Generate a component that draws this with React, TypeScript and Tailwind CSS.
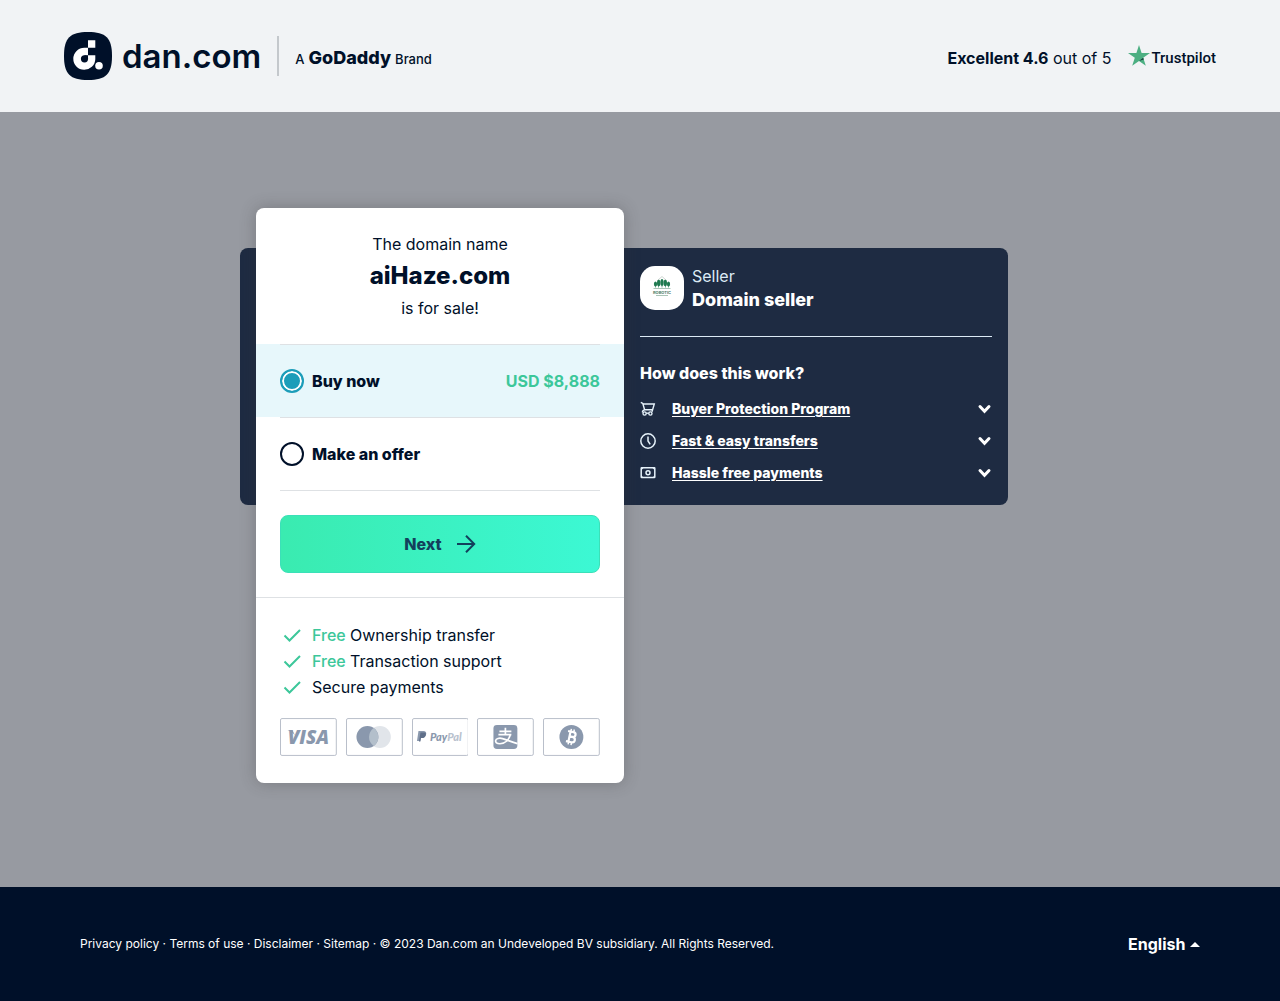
import { useState } from 'react';
import type { ReactNode } from 'react';

const STEPS = [
  { label: 'Buyer Protection Program', icon: <CartIcon /> },
  { label: 'Fast & easy transfers', icon: <ClockIcon /> },
  { label: 'Hassle free payments', icon: <CashIcon /> }
];

const LINKS = ['Privacy policy', 'Terms of use', 'Disclaimer', 'Sitemap'];

export default function App() {
  return (
    <div className="flex min-h-screen flex-col bg-[#979aa1] font-['Inter','Liberation_Sans',sans-serif] text-base text-[#001029]">
      <Header />
      <main className="grow px-4 pt-24 pb-[104px]">
        {/* the card sits in the same grid row as the panel and overlaps it */}
        <div className="mx-auto grid max-w-[800px] grid-cols-[16px_368px_1fr] items-start pr-8">
          <SellerPanel />
          <OfferCard />
        </div>
      </main>
      <Footer />
    </div>
  );
}

function Header() {
  return (
    <header className="flex items-center justify-between bg-[#f1f3f5] px-16 py-8">
      <div className="flex h-12 items-center">
        <a href="#" className="flex items-center gap-2.5">
          <DanLogo />
          <span className="text-[33px] leading-[48px] font-semibold">dan.com</span>
        </a>
        <span className="mx-4 h-10 w-0.5 bg-[#c4c8cc]" />
        <span className="flex items-baseline gap-1 pt-1 text-[13px] font-medium">
          A <span className="text-lg leading-6 font-extrabold">GoDaddy</span> Brand
        </span>
      </div>
      <div className="flex items-center gap-4 pt-1">
        <p>
          <span className="font-bold">Excellent 4.6</span> out of 5
        </p>
        <a href="#" className="flex items-center">
          <svg width="24" height="24" viewBox="0 0 24 24" className="mb-1" aria-hidden="true">
            <path d="M12 1l2.600 7.900H23l-6.800 4.900 2.600 8L12 16.900l-6.800 4.900 2.600-8L1 8.900h8.400z" fill="#4caf82" />
            <path d="M16.200 13.800l.6 1.800-4.800 1.300z" fill="#143c3a" />
          </svg>
          <span className="font-['Roboto',sans-serif] text-[15px] font-medium">Trustpilot</span>
        </a>
      </div>
    </header>
  );
}

function OfferCard() {
  const [choice, setChoice] = useState('buy');

  return (
    <form className="z-10 col-start-2 row-start-1 rounded-lg bg-white shadow-[0_0_16px_rgba(51,51,51,0.3)]">
      <div className="px-6 py-5 text-center leading-8">
        <p>The domain name</p>
        <h1 className="text-2xl leading-8 font-extrabold">aiHaze.com</h1>
        <p>is for sale!</p>
      </div>

      <Option value="buy" label="Buy now" checked={choice === 'buy'} onSelect={setChoice}>
        <span className="font-bold text-[#3cc79a]">USD $8,888</span>
      </Option>
      <Option value="offer" label="Make an offer" checked={choice === 'offer'} onSelect={setChoice} />

      <div className="px-6">
        <div className="border-t border-[#dee1e4] py-6">
          <button
            type="button"
            className="flex h-[58px] w-full items-center justify-center gap-3.5 rounded-lg border border-[#3be0b8] bg-linear-to-r from-[#3aebb0] to-[#3cf8d4] font-extrabold text-[#13405c]"
          >
            Next
            <svg width="20" height="20" viewBox="0 0 20 20" fill="none" stroke="currentColor" strokeWidth="2" aria-hidden="true">
              <path d="M1 10h17M10 1.800L18.200 10 10 18.200" />
            </svg>
          </button>
        </div>
      </div>

      <div className="border-t border-[#dee1e4] px-6 pt-6 pb-[27px]">
        <ul className="leading-[26px]">
          <Benefit free>Ownership transfer</Benefit>
          <Benefit free>Transaction support</Benefit>
          <Benefit>Secure payments</Benefit>
        </ul>
        <PaymentMethods />
      </div>
    </form>
  );
}

interface OptionProps {
  value: string;
  label: string;
  checked: boolean;
  onSelect: (value: string) => void;
  children?: ReactNode;
}

function Option({ value, label, checked, onSelect, children }: OptionProps) {
  return (
    <div className={`px-6 ${checked ? 'bg-[#e7f7fb]' : ''}`}>
      <label className="flex h-[73px] items-center gap-2 border-t border-[#dee1e4]">
        <input
          type="radio"
          name="option"
          value={value}
          checked={checked}
          onChange={() => onSelect(value)}
          className="size-6 appearance-none rounded-full border-2 border-[#001029] bg-white checked:border-[#1c9db9] checked:bg-[#1c9db9] checked:shadow-[inset_0_0_0_2px_white]"
        />
        <span className="grow font-extrabold">{label}</span>
        {children}
      </label>
    </div>
  );
}

function Benefit({ free, children }: { free?: boolean; children: ReactNode }) {
  return (
    <li className="flex items-center gap-2">
      <svg width="24" height="24" viewBox="0 0 24 24" fill="none" stroke="#3cc79a" strokeWidth="2" aria-hidden="true">
        <path d="M4.500 12.500l5 5L20 7" />
      </svg>
      <span>
        {free && <span className="font-medium text-[#3cc79a]">Free </span>}
        {children}
      </span>
    </li>
  );
}

function SellerPanel() {
  return (
    <section className="col-span-3 col-start-1 row-start-1 mt-10 rounded-lg bg-[#1e2b42] py-4 pr-4 pl-[400px] text-white">
      <div className="flex items-center gap-2 border-b border-[#dceaf5] pb-6">
        <SellerAvatar />
        <div className="leading-6">
          <p className="text-[#dceaf5]">Seller</p>
          <p className="text-lg leading-6 font-extrabold">Domain seller</p>
        </div>
      </div>
      <h2 className="mt-6 mb-2 leading-6 font-extrabold">How does this work?</h2>
      <ul>
        {STEPS.map((step) => (
          <li key={step.label}>
            <button type="button" className="flex h-8 w-full items-center gap-4 text-left text-sm font-extrabold">
              {step.icon}
              <span className="grow underline underline-offset-2">{step.label}</span>
              <svg width="16" height="16" viewBox="0 0 16 16" fill="none" stroke="currentColor" strokeWidth="3" strokeLinecap="round" aria-hidden="true">
                <path d="M4 5.500l4.500 4.800L13 5.500" />
              </svg>
            </button>
          </li>
        ))}
      </ul>
    </section>
  );
}

function Footer() {
  return (
    <footer className="flex h-[114px] items-center justify-between bg-[#001029] px-20 text-white">
      <p className="text-xs">
        {LINKS.map((link) => (
          <span key={link}>
            <a href="#">{link}</a> ·{' '}
          </span>
        ))}
        © 2023 Dan.com an Undeveloped BV subsidiary. All Rights Reserved.
      </p>
      <div className="flex items-center gap-1">
        <select aria-label="Language" className="appearance-none bg-transparent font-bold">
          <option>English</option>
        </select>
        <svg width="10" height="5" viewBox="0 0 10 5" fill="currentColor" aria-hidden="true">
          <path d="M0 5l5-5 5 5z" />
        </svg>
      </div>
    </footer>
  );
}

function DanLogo() {
  return (
    <svg width="48" height="48" viewBox="0 0 48 48" aria-hidden="true">
      <path d="M24 0C42 0 48 6 48 24s-6 24-24 24S0 42 0 24 6 0 24 0z" fill="#001029" />
      <path fill="#fff" d="M24 8.300h7.300v7.500H24zM24 15.800v7.500h7.300v3.900a11 11 0 1 1-11-11.400z" />
      <circle cx="20.500" cy="26.800" r="3.600" fill="#001029" />
      <path fill="#001029" d="M20.500 23.200H24v3.600h-3.500z" />
      <circle cx="35" cy="33.700" r="3.800" fill="#fff" />
    </svg>
  );
}

function SellerAvatar() {
  return (
    <svg width="44" height="44" viewBox="0 0 44 44" aria-hidden="true">
      <rect width="44" height="44" rx="15" fill="#fff" />
      <path d="M17.500 14.500l4.500-4 4.500 4" fill="none" stroke="#cfd6d2" />
      <g fill="#1f7a50">
        <ellipse cx="15.500" cy="18" rx="1.600" ry="2.600" />
        <ellipse cx="18.700" cy="17" rx="1.700" ry="3.200" />
        <ellipse cx="22" cy="16.500" rx="1.600" ry="3.500" />
        <ellipse cx="25.300" cy="17" rx="1.700" ry="3.200" />
        <ellipse cx="28.500" cy="18" rx="1.600" ry="2.600" />
        <path d="M15.200 20h.6v1.500h-.6zM18.400 20h.6v1.500h-.6zM21.700 20h.6v1.500h-.6zM25 20h.6v1.500H25zM28.200 20h.6v1.500h-.6z" />
      </g>
      <path d="M13.500 22.500h17" stroke="#a9c4b6" />
      <text x="22" y="27.500" textAnchor="middle" fontSize="4" fontWeight="700" fill="#4d7a66">
        ROBOTIC
      </text>
      <path d="M16 29.500h12" stroke="#a9c4b6" />
    </svg>
  );
}

function CartIcon() {
  return (
    <svg width="16" height="16" viewBox="0 0 16 16" fill="none" stroke="#e6f2fa" strokeWidth="1.400" aria-hidden="true">
      <path d="M.8 1.300l2 1.200 1.800 6.300h8l1.700-5.800H3M4.600 8.800c-1.800.6-2.400 1.600-2 2.700M12.600 8.800l-.6 2" />
      <circle cx="4.600" cy="12.500" r="1.600" />
      <circle cx="10.400" cy="12.500" r="1.600" />
      <path d="M6.200 12.200h2.600" />
    </svg>
  );
}

function ClockIcon() {
  return (
    <svg width="16" height="16" viewBox="0 0 16 16" fill="none" stroke="#e6f2fa" strokeWidth="1.500" aria-hidden="true">
      <circle cx="8" cy="8" r="7.200" />
      <path d="M8 3.500V8l2.200 3.300" />
    </svg>
  );
}

function CashIcon() {
  return (
    <svg width="16" height="16" viewBox="0 0 16 16" fill="none" stroke="#e6f2fa" strokeWidth="1.500" aria-hidden="true">
      <rect x="1.200" y="2.800" width="13.600" height="9.800" rx="0.500" />
      <circle cx="8" cy="7.700" r="2" />
      <path d="M1 5.500l3-3H1zM15 5.500l-3-3h3zM1 10l3 3H1zM15 10l-3 3h3z" fill="#e6f2fa" stroke="none" />
    </svg>
  );
}

function PaymentMethods() {
  return (
    <div className="mt-[18px] grid grid-cols-5 gap-[9px]">
      <PayBox label="Visa">
        <text x="28.500" y="26" textAnchor="middle" fontFamily="Open Sans, sans-serif" fontSize="19" fontWeight="800" fontStyle="italic" fill="#8a98ad">
          VISA
        </text>
        <path d="M7.500 12.300h5l2.500 5c-2-2.500-4.500-4-7.500-5z" fill="#8a98ad" />
      </PayBox>
      <PayBox label="Mastercard">
        <circle cx="34" cy="19" r="11" fill="#e1e5ea" />
        <circle cx="21.500" cy="19" r="11" fill="#8a98ad" />
        <path d="M27.800 10a11 11 0 0 1 0 18 11 11 0 0 1 0-18z" fill="#b3bfcb" />
      </PayBox>
      <PayBox label="PayPal">
        <path d="M6.500 13h5c2.200 0 3.200 1.300 2.700 3.200-.5 2.300-1.800 3.300-4 3.300H8.800L8.200 23H5z" fill="#8a98ad" />
        <path d="M8.500 14.500h4.700c.8.800.9 1.700.6 2.700-.6 2-1.800 2.800-3.800 2.800H9l-.6 3.500H7z" fill="#5f6f89" />
        <text x="18" y="23" fontFamily="Lato, sans-serif" fontSize="11" fontWeight="900" fontStyle="italic" fill="#8a98ad">
          Pay<tspan fill="#b9c2ce">Pal</tspan>
        </text>
      </PayBox>
      <PayBox label="Alipay">
        <rect x="16.500" y="7" width="24" height="24" rx="3.500" fill="#8a98ad" />
        <path
          d="M22.500 13.300h12M28.500 9.800v6.700M21.500 16.600h13M33.500 16.800c-1.500 5-5.500 9-10.500 9-3.300 0-4.600-1.500-4.300-3.200.4-2.100 3.600-2.900 6.900-2 4.500 1.200 9 3.600 15 5"
          fill="none"
          stroke="#fff"
          strokeWidth="1.700"
        />
      </PayBox>
      <PayBox label="Bitcoin">
        <circle cx="28.500" cy="19" r="12" fill="#8a98ad" />
        <g transform="rotate(12 28.500 19)" fill="none" stroke="#fff" strokeWidth="2.200">
          <path d="M26.500 13.500v11M24 13.800h5.500c3.500 0 3.500 4.900 0 4.900h-3M29.500 18.700c4 0 4 5.500 0 5.500H24" />
          <path d="M26.800 11v3M29.800 11v3M26.800 24v3M29.800 24v3" strokeWidth="1.500" />
        </g>
      </PayBox>
    </div>
  );
}

function PayBox({ label, children }: { label: string; children: ReactNode }) {
  return (
    <svg viewBox="0 0 57 38" className="h-[38px] w-full" role="img" aria-label={label}>
      <rect x="0.500" y="0.500" width="56" height="37" rx="1.500" fill="#fff" stroke="#b9bfca" />
      {children}
    </svg>
  );
}
